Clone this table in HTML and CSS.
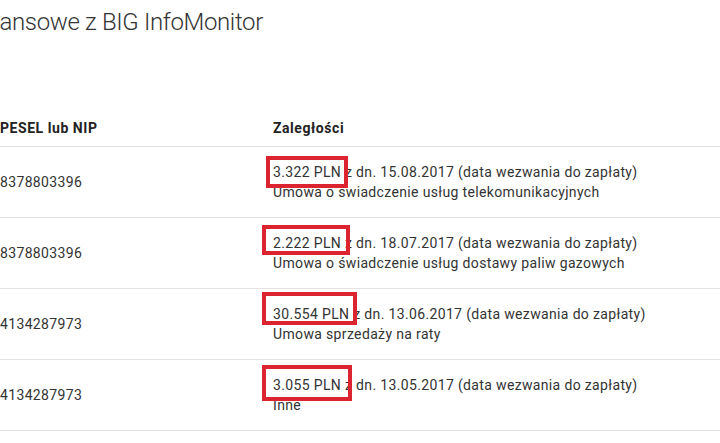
FILE: index.html
```html
<!DOCTYPE html>
<html lang="pl">
<head>
    <meta charset="UTF-8">
    <meta name="viewport" content="width=device-width, initial-scale=1.0">
    <title>Zobowiązania finansowe z BIG InfoMonitor</title>
    <link rel="stylesheet" href="styles.css">
</head>
<body>
    <h1 class="page-title">finansowe z BIG InfoMonitor</h1>

    <table class="debts">
        <thead>
            <tr>
                <th class="col-id">PESEL lub NIP</th>
                <th>Zaległości</th>
            </tr>
        </thead>
        <tbody>
            <tr>
                <td>8378803396</td>
                <td>
                    <span class="amount">3.322 PLN<span class="mark mark-1"></span></span> z dn. 15.08.2017 (data wezwania do zapłaty)<br>
                    Umowa o świadczenie usług telekomunikacyjnych
                </td>
            </tr>
            <tr>
                <td>8378803396</td>
                <td>
                    <span class="amount">2.222 PLN<span class="mark mark-2"></span></span> z dn. 18.07.2017 (data wezwania do zapłaty)<br>
                    Umowa o świadczenie usług dostawy paliw gazowych
                </td>
            </tr>
            <tr>
                <td>4134287973</td>
                <td>
                    <span class="amount">30.554 PLN<span class="mark mark-3"></span></span> z dn. 13.06.2017 (data wezwania do zapłaty)<br>
                    Umowa sprzedaży na raty
                </td>
            </tr>
            <tr>
                <td>4134287973</td>
                <td>
                    <span class="amount">3.055 PLN<span class="mark mark-4"></span></span> z dn. 13.05.2017 (data wezwania do zapłaty)<br>
                    Inne
                </td>
            </tr>
        </tbody>
    </table>
</body>
</html>
```

FILE: styles.css
```css
body {
    font-family: Roboto, "Liberation Sans", sans-serif;
    margin: 0;
    padding: 0;
    color: #333;
    background: #fff;
    overflow: hidden;
}

.page-title {
    font-size: 24px;
    font-weight: 300;
    line-height: 28px;
    letter-spacing: -0.35px;
    margin: 8px 0 0 0;
    text-indent: -26px; /* cut off at the left edge of the window */
    white-space: nowrap;
    color: #333;
}

.debts {
    width: 100%;
    margin-top: 74px;
    border-collapse: collapse;
    table-layout: fixed;
    font-size: 14px;
    line-height: 20px;
    letter-spacing: 0.35px;
}

.debts th {
    text-align: left;
    font-weight: bold;
    letter-spacing: 0.55px;
    color: #222;
    padding: 8px 0;
    border-bottom: 1px solid #e2e2e2;
}

.debts .col-id {
    width: 273px;
}

.debts td {
    vertical-align: middle;
    padding: 15px 0;
    border-bottom: 1px solid #e2e2e2;
    white-space: nowrap;
}

.amount {
    position: relative;
}

/* red frames drawn over the amounts */
.mark {
    position: absolute;
    border: 4px solid #dc2430;
    box-sizing: border-box;
}

.mark-1 { left: -7px;  top: -8px;  width: 82px; height: 32px; }
.mark-2 { left: -11px; top: -10px; width: 88px; height: 30px; }
.mark-3 { left: -11px; top: -14px; width: 95px; height: 33px; }
.mark-4 { left: -11px; top: -12px; width: 90px; height: 36px; }
```
